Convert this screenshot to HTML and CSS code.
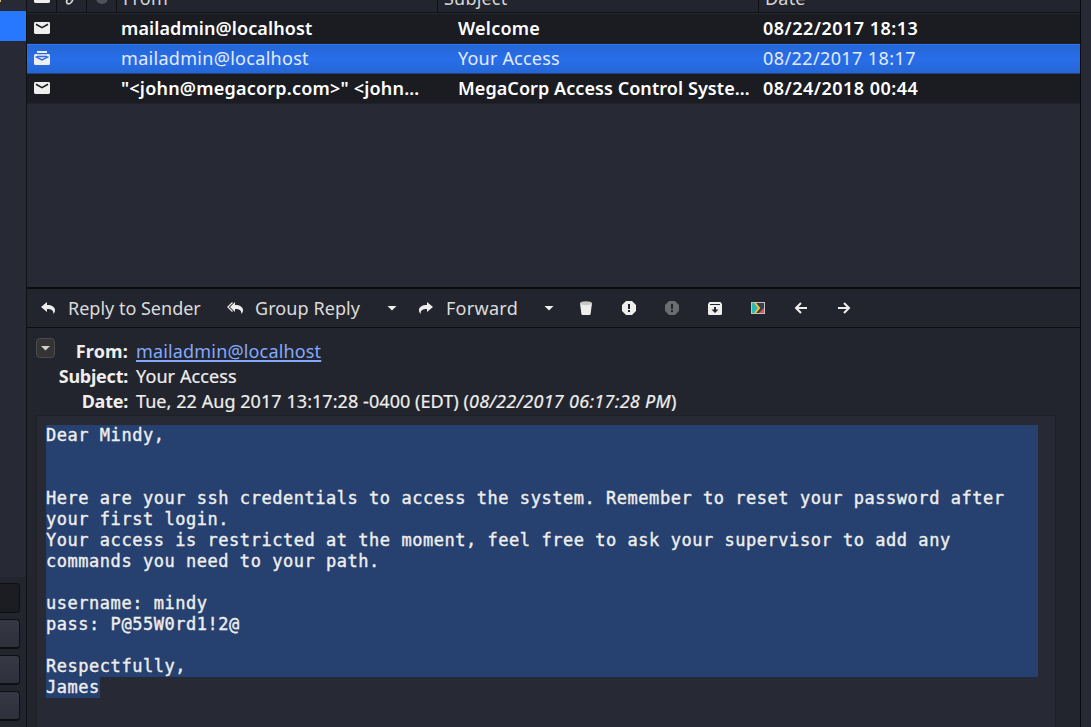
FILE: index.html
```html
<!DOCTYPE html>
<html lang="en">
<head>
<meta charset="utf-8">
<title>Mail</title>
<link rel="stylesheet" href="styles.css">
</head>
<body>
<svg width="0" height="0" class="defs">
  <symbol id="mail" viewBox="0 0 16 12"><rect width="16" height="12" rx="1.4" fill="#eeeeec"/><path d="M2 2.3 8 5.6 14 2.3" fill="none" stroke="#1a1c22" stroke-width="1.6"/></symbol>
  <symbol id="alert" viewBox="0 0 14 14"><path d="M4 0h6l4 4v6l-4 4H4l-4-4V4z"/><path d="M6 3h2v5H6zM6 9h2v2H6z" fill="#23252e"/></symbol>
  <symbol id="arrow" viewBox="0 0 14 12"><path d="M0 5 6 0v3c5 0 8 2 8 5.2 0 1.600-.7 2.800-1.600 3.800.2-3.300-1.400-5-6.400-5v3z"/></symbol>
</svg>
<div class="app">
  <aside class="sidebar">
    <div class="folders"><i class="mark"></i><div class="active"></div></div>
    <div class="controls"><div class="entry"></div><div class="button"></div><div class="button"></div><div class="button"></div></div>
  </aside>
  <main class="main">
    <section class="list">
      <div class="head">
        <div class="cell"><svg class="hmail" width="16" height="12"><use href="#mail"/></svg></div>
        <div class="cell"><svg class="clip" width="12" height="14" viewBox="0 0 12 14"><path d="M7.500 2 3.300 8.500c-1.400 2.300-.6 4.300 1.200 4.300 2.500 0 4.500-3 4.500-6.300M6 9l2-4" fill="none" stroke="#d8d8d5" stroke-width="1.700"/></svg></div>
        <div class="cell"><i class="dot"></i></div>
        <div class="cell name s-from">From</div>
        <div class="cell name s-subj">Subject</div>
        <div class="cell name s-date">Date</div>
      </div>
      <div class="row unread">
        <svg width="16" height="12"><use href="#mail"/></svg><span class="t1">mailadmin@localhost</span><span class="t2">Welcome</span><span class="t3">08/22/2017 18:13</span>
      </div>
      <div class="row selected">
        <svg width="16" height="14" viewBox="0 0 16 14"><path d="M3 0h10v3h1.500Q16 3 16 4.500v8q0 1.500-1.500 1.500h-13Q0 14 0 12.500v-8Q0 3 1.500 3H3z" fill="#eeeeec"/><path d="M3 2.700h10M3 5.500h10" fill="none" stroke="#286bea" stroke-width="1.300"/><path d="M1.500 5.700 8 9l6.500-3.300" fill="none" stroke="#286bea" stroke-width="1.500"/></svg><span class="t4">mailadmin@localhost</span><span class="t5">Your Access</span><span class="t6">08/22/2017 18:17</span>
      </div>
      <div class="row unread">
        <svg width="16" height="12"><use href="#mail"/></svg><span class="t7">"&lt;john@megacorp.com&gt;" &lt;john…</span><span class="t8">MegaCorp Access Control Syste…</span><span class="t3">08/24/2018 00:44</span>
      </div>
    </section>
    <nav class="toolbar">
      <span class="tool reply"><svg width="14" height="12"><use href="#arrow"/></svg><span class="b1">Reply to Sender</span></span>
      <span class="tool group"><svg width="16" height="12" viewBox="0 0 16 12"><path d="M3 5 8 0v3c5 0 8 2 8 5.200 0 1.600-.7 2.800-1.600 3.800.2-3.300-1.400-5-6.400-5v3z"/><path d="M5.500.5.8 5l4.700 4.500" fill="none" stroke="#eeeeec" stroke-width="1.200"/></svg><span class="b2">Group Reply</span></span>
      <i class="caret"></i>
      <span class="tool forward"><svg class="flip" width="14" height="12"><use href="#arrow"/></svg><span class="b3">Forward</span></span>
      <i class="caret"></i>
      <span class="actions">
        <svg width="14" height="14"><path d="M1 2h12l-1.400 11q-.1 1-1.200 1H3.600q-1.100 0-1.200-1z"/><ellipse cx="7" cy="2.200" rx="6" ry="2" fill="#c8c8c6"/></svg>
        <svg width="14" height="14"><use href="#alert"/></svg>
        <svg class="dim" width="14" height="14"><use href="#alert"/></svg>
        <svg width="14" height="13"><path d="M1.500 0h11L14 2v9.500q0 1.500-1.500 1.500h-11Q0 13 0 11.500V2z"/><path d="M2 2h10v1H2zM6 5h2v2.500h2.500L7 11 3.500 7.500H6z" fill="#23252e"/></svg>
        <svg width="14" height="12"><path fill="#c3c3c0" d="M0 0h14v12H0z"/><path fill="#384050" d="M1 1h12v10H1z"/><path fill="#26b9b5" d="M1 1h3l4 5-4 5H1z"/><path fill="#f04f58" d="m13 6v5H8z"/><path d="m4 1 4 5-4 5" fill="none" stroke="#f7c52b" stroke-width="2"/></svg>
        <svg width="14" height="12"><path d="M13 6H2.500M7 1 2 6l5 5" fill="none" stroke="#eeeeec" stroke-width="2"/></svg>
        <svg width="14" height="12"><path d="M1 6h10.500M7 1l5 5-5 5" fill="none" stroke="#eeeeec" stroke-width="2"/></svg>
      </span>
    </nav>
    <section class="message">
      <div class="headers">
        <div class="toggle"><i class="caret"></i></div>
        <div class="labels"><b class="l1">From:</b><b class="l2">Subject:</b><b class="l3">Date:</b></div>
        <div class="values"><div><a class="v1">mailadmin@localhost</a></div><div class="v2">Your Access</div><div class="v3">Tue, 22 Aug 2017 13:17:28 -0400 (EDT) (<em>08/22/2017 06:17:28 PM</em>)</div></div>
      </div>
      <div class="body"><pre class="block">Dear Mindy,


Here are your ssh credentials to access the system. Remember to reset your password after
your first login.
Your access is restricted at the moment, feel free to ask your supervisor to add any
commands you need to your path.

username: mindy
pass: P@55W0rd1!2@

Respectfully,</pre><pre class="last">James</pre></div>
    </section>
  </main>
  <div class="edge"></div>
</div>
</body>
</html>
```
FILE: styles.css
```css
* { box-sizing: border-box; }
body { margin: 0; background: #23252e; color: #eeeeec; font: 18px/24px "Noto Sans", sans-serif; overflow: hidden; }
.defs { position: absolute; }
svg { display: block; flex: none; fill: #eeeeec; }
i { display: block; }
.app { display: grid; grid-template-columns: 27px 1053px 11px; height: 727px; }
.sidebar { border-right: 1px solid #101116; display: flex; flex-direction: column; }
.folders { height: 577px; background: #272934; }
.mark { width: 1px; height: 2px; margin-bottom: 9px; background: #e5b878; }
.active { height: 30px; background: #2777ff; }
.controls { display: flex; flex-direction: column; gap: 6px; padding: 6px 6px 0 0; }
.entry, .button { height: 30px; border: 1px solid #0e0f14; border-left: 0; border-radius: 0 4px 4px 0; background: #1b1d23; }
.button { background: linear-gradient(#363944, #2e313c); border-bottom-width: 2px; }
.edge { border-left: 1px solid #090a0d; background: #272934; }
.main { display: flex; flex-direction: column; min-width: 0; }
.list { height: 289px; background: #272934; border-bottom: 2px solid #0b0c10; }
.head { display: grid; grid-template-columns: 30px 30px 30px 321px 321px 1fr; height: 13px; margin-bottom: 1px; background: #23252e; border-bottom: 1px solid #101116; overflow: hidden; }
.cell { height: 12px; overflow: hidden; border-right: 1px solid #101116; display: flex; align-items: flex-end; white-space: nowrap; }
.cell:last-child { border: 0; }
.hmail { margin: 0 0 9px 7px; }
.clip { margin: 0 0 7px 7px; }
.dot { width: 12px; height: 12px; border-radius: 6px; background: #50525b; margin: 0 0 8px 9px; }
.name { padding: 0 0 2px 6px; color: #d6d7d8; letter-spacing: .2px; }
.row { display: grid; grid-template-columns: 87px 337px 305px 1fr; height: 30px; align-items: center; padding: 0 0 1px 7px; background: #1a1c22; white-space: nowrap; border-bottom: 1px solid #20222a; }
.unread { font-weight: 600; color: #fff; }
.selected { background: linear-gradient(#2666d4, #286eea 50%, #2666d4); border-top: 1px solid #2777ff; border-bottom: 1px solid #20427e; color: #e3ebfb; padding-bottom: 2px; }
.t1 { letter-spacing: .1px; }
.t2 { letter-spacing: .25px; }
.t3 { letter-spacing: .48px; }
.t4 { letter-spacing: .3px; }
.t5 { letter-spacing: .2px; }
.t6 { letter-spacing: .4px; }
.t7 { letter-spacing: .21px; }
.t8 { letter-spacing: .07px; }
.toolbar { height: 39px; border-bottom: 1px solid #0e0f14; display: flex; align-items: center; padding-left: 14px; white-space: nowrap; }
.tool { display: flex; align-items: center; color: #dcdcda; }
.reply { width: 186px; gap: 13px; }
.group { width: 160px; gap: 12px; }
.forward { width: 125px; gap: 13px; margin-left: 22px; }
.b2 { letter-spacing: .08px; }
.b3 { letter-spacing: .28px; }
.flip { transform: scaleX(-1); }
.caret { width: 10px; height: 5px; background: #eeeeec; clip-path: polygon(0 0, 100% 0, 50% 100%); }
.actions { display: flex; align-items: center; gap: 29px; margin-left: 25px; }
.dim { fill: #6b6c70; }
.message { flex: 1; display: flex; flex-direction: column; }
.headers { display: flex; height: 87px; padding: 10px 0 0 9px; white-space: nowrap; line-height: 25px; }
.toggle { width: 19px; height: 20px; border: 1px solid #4b4b4d; border-radius: 4px; background: #343435; display: flex; align-items: center; justify-content: center; }
.toggle .caret { background: #d0d0ce; }
.labels { width: 73px; padding-top: 1px; display: flex; flex-direction: column; align-items: flex-end; }
.l1 { letter-spacing: .15px; }
.l2 { letter-spacing: -.25px; }
.l3 { letter-spacing: -.25px; }
.values { margin-left: 8px; padding-top: 1px; }
.v1 { letter-spacing: .16px; }
.v2, .v3 { -webkit-text-stroke: .2px currentColor; }
.v2 { letter-spacing: .1px; }
.v3 { letter-spacing: .06px; }
em { letter-spacing: .29px; }
a { color: #85a9fc; text-decoration: underline; text-decoration-thickness: 2px; text-underline-offset: 2px; }
.body { flex: 1; width: 1020px; margin-left: 9px; border: 1px solid #1e2028; border-bottom: 0; background: #272934; padding: 9px 17px 0 9px; }
pre { margin: 0; font: 17px/21px "DejaVu Sans Mono", monospace; letter-spacing: .535px; background: #26406f; -webkit-text-stroke: .4px currentColor; }
.block { height: 252px; }
.last { width: 54px; height: 21px; }
```
